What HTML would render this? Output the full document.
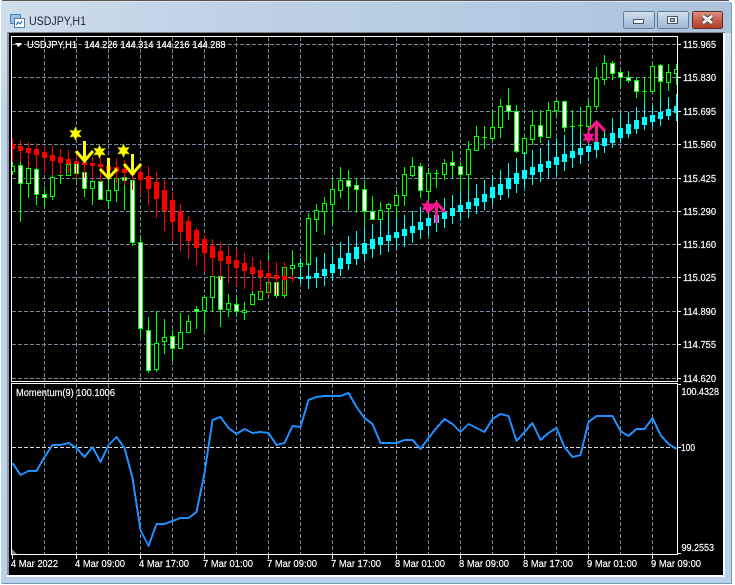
<!DOCTYPE html>
<html>
<head>
<meta charset="utf-8">
<style>
html,body{margin:0;padding:0;background:#fff;width:735px;height:585px;overflow:hidden}
svg{display:block}
text{font-family:"Liberation Sans",sans-serif;font-size:10px;fill:#fff;stroke:#fff;stroke-width:.18}
</style>
</head>
<body>
<svg width="735" height="585" viewBox="0 0 735 585" xmlns="http://www.w3.org/2000/svg" shape-rendering="crispEdges">
<defs>
<linearGradient id="tb" x1="0" x2="1" y1="0" y2="0"><stop offset="0" stop-color="#cfdeec"/><stop offset=".25" stop-color="#c2d4e6"/><stop offset="1" stop-color="#abc3dc"/></linearGradient>
<linearGradient id="lf" x1="0" x2="0" y1="0" y2="1"><stop offset="0" stop-color="#dbe6f0"/><stop offset=".2" stop-color="#bcd3ea"/><stop offset="1" stop-color="#b9d1ea"/></linearGradient>
<linearGradient id="btn" x1="0" x2="0" y1="0" y2="1"><stop offset="0" stop-color="#d6e2ee"/><stop offset=".5" stop-color="#b4c9df"/><stop offset="1" stop-color="#9fb8d2"/></linearGradient>
<linearGradient id="cls" x1="0" x2="0" y1="0" y2="1"><stop offset="0" stop-color="#dc9388"/><stop offset=".5" stop-color="#c8604c"/><stop offset="1" stop-color="#b03c22"/></linearGradient>
<clipPath id="mc"><rect x="12" y="37" width="665" height="344"/></clipPath>
<clipPath id="sc"><rect x="12" y="384" width="665" height="170"/></clipPath>
</defs>

<!-- window chrome -->
<rect x="0" y="0" width="733" height="585" fill="#fff"/>
<path d="M1 4Q1 1 4 1H728Q732 1 732 5V583H1Z" fill="url(#lf)"/>
<rect x="1" y="2" width="731" height="31" fill="url(#tb)"/>
<path d="M2 .5H729" stroke="#555" fill="none"/>
<path d="M731.5 4V583M1.5 583.5H732" stroke="#6f9cb4" fill="none"/>
<rect x="7" y="32" width="2" height="545" fill="#8e9aa6"/>
<rect x="723" y="32" width="2" height="545" fill="#fff"/>
<rect x="7" y="575" width="718" height="2" fill="#fff"/>
<rect x="7" y="32" width="718" height="1" fill="#77838f"/>
<rect x="9" y="33" width="714" height="542" fill="#000"/>

<!-- title -->
<g>
<rect x="10.5" y="14.5" width="10" height="9" fill="#9fc0e4" stroke="#4f7fb5"/>
<rect x="14.5" y="18.5" width="10" height="9" fill="#fff" stroke="#4f7fb5"/>
<path d="M16 25l2-3 2 2 2-3" stroke="#2f66b0" fill="none"/>
</g>
<text x="29" y="25" style="font-size:12px;fill:#232336;stroke:none" textLength="57" lengthAdjust="spacingAndGlyphs" shape-rendering="auto">USDJPY,H1</text>

<!-- buttons -->
<rect x="623.5" y="11.5" width="31" height="17" rx="2" fill="url(#btn)" stroke="#5f7d9c"/>
<rect x="633.5" y="19.5" width="10" height="4" fill="#f2f5f8" stroke="#44566a"/>
<rect x="657.5" y="11.5" width="31" height="17" rx="2" fill="url(#btn)" stroke="#5f7d9c"/>
<rect x="667.5" y="16.5" width="10" height="7" fill="#f2f5f8" stroke="#44566a"/>
<rect x="670.5" y="18.5" width="4" height="3" fill="#9fb8d2" stroke="#44566a"/>
<rect x="692.5" y="11.5" width="30" height="17" rx="2" fill="url(#cls)" stroke="#5b2a2a"/>
<path d="M703 16L712 23M712 16L703 23" stroke="#3b3b3b" stroke-width="4.5" fill="none" shape-rendering="auto"/>
<path d="M703 16L712 23M712 16L703 23" stroke="#f4f4f4" stroke-width="3" fill="none" shape-rendering="auto"/>

<!-- frames + grid -->
<g fill="none" stroke="#778899" stroke-dasharray="4 2">
<path d="M12 44.5H677M12 77.5H677M12 111.5H677M12 144.5H677M12 178.5H677M12 211.5H677M12 244.5H677M12 277.5H677M12 311.5H677M12 344.5H677M12 378.5H677"/>
<path d="M44.5 37V381M76.5 37V381M108.5 37V381M140.5 37V381M172.5 37V381M204.5 37V381M236.5 37V381M268.5 37V381M300.5 37V381M332.5 37V381M364.5 37V381M396.5 37V381M428.5 37V381M460.5 37V381M492.5 37V381M524.5 37V381M556.5 37V381M588.5 37V381M620.5 37V381M652.5 37V381"/>
<path d="M44.5 384V554M76.5 384V554M108.5 384V554M140.5 384V554M172.5 384V554M204.5 384V554M236.5 384V554M268.5 384V554M300.5 384V554M332.5 384V554M364.5 384V554M396.5 384V554M428.5 384V554M460.5 384V554M492.5 384V554M524.5 384V554M556.5 384V554M588.5 384V554M620.5 384V554M652.5 384V554"/>
<path d="M12 447.5H677" stroke="#dcdcdc"/>
</g>

<g clip-path="url(#mc)" fill="none">
<!-- green wicks -->
<path stroke="#0f0" d="M12.5 161V175M20.5 160V222M28.5 160V198M36.5 161V205M44.5 186V207M52.5 175V200M60.5 167V184M68.5 160V176M76.5 160V181M84.5 165V197M92.5 175V205M100.5 175V200M108.5 180V209M116.5 175V202M124.5 170V210M132.5 154V246M140.5 236V338M148.5 317V373M156.5 311V372M164.5 319V354M172.5 330V361M180.5 313V348M188.5 315V332M196.5 306V329M204.5 295V333M212.5 276V312M220.5 276V327M228.5 294V317M236.5 298V316M244.5 302V320M252.5 285V305M260.5 282V300M268.5 252V295M276.5 268V298M284.5 262V298M292.5 250V280M300.5 258V280M308.5 213V270M316.5 204V232M324.5 197V235M332.5 178V225M340.5 167V198M348.5 170V210M356.5 179V213M364.5 180V225M372.5 196V220M380.5 202V223M388.5 203V218M396.5 191V218M404.5 167V206M412.5 157V177M420.5 163V198M428.5 168V200M436.5 170V188M444.5 159V180M452.5 151V178M460.5 162V193M468.5 141V193M476.5 126V151M484.5 126V149M492.5 110V141M500.5 99V138M508.5 88V120M516.5 105V153M524.5 135V160M532.5 110V145M540.5 110V143M548.5 102V138M556.5 100V117M564.5 101V132M572.5 110V130M580.5 107V132M588.5 99V130M596.5 67V110M604.5 55V85M612.5 61V80M620.5 70V87M628.5 71V83M636.5 78V98M644.5 77V105M652.5 65V93M660.5 64V106M668.5 64V91M676.5 64V85"/>
<!-- hollow bodies -->
<path stroke="#0f0" fill="#000" d="M10.5 166.5h4v5h-4zM26.5 168.5h4v15h-4zM50.5 177.5h4v19h-4zM66.5 164.5h4v11h-4zM90.5 181.5h4v7h-4zM106.5 190.5h4v10h-4zM114.5 178.5h4v12h-4zM154.5 343.5h4v26h-4zM162.5 337.5h4v4h-4zM178.5 332.5h4v16h-4zM186.5 321.5h4v11h-4zM202.5 297.5h4v13h-4zM210.5 276.5h4v21h-4zM226.5 303.5h4v6h-4zM242.5 310.5h4v2h-4zM250.5 294.5h4v10h-4zM258.5 291.5h4v8h-4zM266.5 282.5h4v10h-4zM282.5 267.5h4v28h-4zM290.5 265.5h4v3h-4zM298.5 263.5h4v3h-4zM306.5 218.5h4v46h-4zM314.5 210.5h4v9h-4zM322.5 203.5h4v8h-4zM330.5 189.5h4v15h-4zM338.5 180.5h4v10h-4zM378.5 210.5h4v9h-4zM386.5 204.5h4v4h-4zM394.5 195.5h4v10h-4zM402.5 174.5h4v21h-4zM410.5 166.5h4v9h-4zM426.5 173.5h4v18h-4zM442.5 163.5h4v11h-4zM466.5 149.5h4v25h-4zM474.5 136.5h4v14h-4zM490.5 127.5h4v11h-4zM498.5 106.5h4v21h-4zM522.5 138.5h4v15h-4zM530.5 125.5h4v14h-4zM546.5 110.5h4v27h-4zM554.5 101.5h4v9h-4zM586.5 106.5h4v20h-4zM594.5 78.5h4v28h-4zM602.5 63.5h4v16h-4zM650.5 66.5h4v25h-4zM666.5 72.5h4v10h-4zM674.5 69.5h4v4h-4z"/>
<!-- white bodies -->
<path stroke="#0f0" fill="#fff" d="M18.5 165.5h4v18h-4zM34.5 169.5h4v25h-4zM42.5 194.5h4v3h-4zM74.5 163.5h4v10h-4zM82.5 172.5h4v16h-4zM98.5 181.5h4v18h-4zM122.5 177.5h4v3h-4zM130.5 180.5h4v62h-4zM138.5 242.5h4v86h-4zM146.5 330.5h4v40h-4zM170.5 336.5h4v12h-4zM194.5 309.5h4v2h-4zM218.5 276.5h4v33h-4zM234.5 304.5h4v7h-4zM274.5 282.5h4v13h-4zM346.5 180.5h4v6h-4zM354.5 185.5h4v4h-4zM362.5 189.5h4v22h-4zM370.5 211.5h4v8h-4zM418.5 166.5h4v24h-4zM450.5 162.5h4v3h-4zM458.5 166.5h4v8h-4zM506.5 105.5h4v6h-4zM514.5 111.5h4v40h-4zM538.5 125.5h4v11h-4zM562.5 101.5h4v26h-4zM610.5 63.5h4v10h-4zM618.5 72.5h4v5h-4zM626.5 77.5h4v3h-4zM634.5 80.5h4v11h-4zM658.5 65.5h4v16h-4z"/>
<!-- green dojis -->
<path stroke="#0f0" d="M58 175.5h5M434 173.5h5M482 137.5h5M570 126.5h5M578 125.5h5M642 91.5h5"/>

<!-- red wicks -->
<path stroke="#f00" d="M12.5 138V162M20.5 140V162M28.5 142V167M36.5 143V168M44.5 145V173M52.5 146V175M60.5 149V175M68.5 150V173M76.5 155V178M84.5 157V178M92.5 157V180M100.5 157V182M108.5 157V180M116.5 158V183M124.5 160V185M132.5 162V190M140.5 163V195M148.5 166V205M156.5 172V218M164.5 180V231M172.5 192V242M180.5 204V251M188.5 216V259M196.5 228V266M204.5 235V272M212.5 239V277M220.5 242V280M228.5 246V283M236.5 249V286M244.5 253V289M252.5 257V291M260.5 260V293M268.5 261V295M276.5 262V295M284.5 262V295M292.5 275V282"/>
<path fill="#f00" d="M10 144h5v5h-5zM18 146h5v5h-5zM26 148h5v5h-5zM34 149h5v6h-5zM42 152h5v6h-5zM50 155h5v6h-5zM58 157h5v6h-5zM66 159h5v5h-5zM74 161h5v3h-5zM82 162h5v3h-5zM90 163h5v3h-5zM98 164h5v3h-5zM106 166h5v5h-5zM114 167h5v5h-5zM122 169h5v4h-5zM130 170h5v5h-5zM138 172h5v8h-5zM146 176h5v13h-5zM154 182h5v17h-5zM162 190h5v21h-5zM170 200h5v22h-5zM178 211h5v21h-5zM186 221h5v20h-5zM194 230h5v18h-5zM202 239h5v14h-5zM210 246h5v12h-5zM218 251h5v10h-5zM226 256h5v8h-5zM234 260h5v8h-5zM242 263h5v8h-5zM250 267h5v7h-5zM258 270h5v7h-5zM266 273h5v5h-5zM274 275h5v4h-5zM282 276h5v4h-5z"/>
<path stroke="#f00" d="M290 278.5h5"/>

<!-- cyan wicks -->
<path stroke="#0ff" d="M300.5 259V284M308.5 263V289M316.5 257V288M324.5 253V286M332.5 246V281M340.5 242V276M348.5 236V270M356.5 231V265M364.5 227V261M372.5 224V258M380.5 219V255M388.5 215V252M396.5 218V250M404.5 215V247M412.5 211V243M420.5 207V239M428.5 205V236M436.5 200V232M444.5 198V228M452.5 195V224M460.5 192V221M468.5 190V218M476.5 184V214M484.5 180V210M492.5 175V205M500.5 170V200M508.5 163V198M516.5 158V193M524.5 152V188M532.5 150V185M540.5 148V182M548.5 140V178M556.5 138V176M564.5 135V171M572.5 128V168M580.5 132V164M588.5 133V161M596.5 128V158M604.5 130V153M612.5 118V148M620.5 113V143M628.5 112V138M636.5 107V134M644.5 102V130M652.5 105V127M660.5 98V126M668.5 97V120M676.5 94V121"/>
<path fill="#0ff" d="M298 277h5v2h-5zM306 276h5v3h-5zM314 273h5v5h-5zM322 269h5v7h-5zM330 264h5v9h-5zM338 258h5v11h-5zM346 253h5v11h-5zM354 247h5v12h-5zM362 243h5v11h-5zM370 239h5v10h-5zM378 237h5v8h-5zM386 235h5v6h-5zM394 232h5v6h-5zM402 229h5v7h-5zM410 226h5v7h-5zM418 222h5v8h-5zM426 218h5v8h-5zM434 215h5v8h-5zM442 212h5v7h-5zM450 208h5v8h-5zM458 205h5v7h-5zM466 202h5v7h-5zM474 198h5v8h-5zM482 194h5v8h-5zM490 187h5v11h-5zM498 184h5v11h-5zM506 178h5v11h-5zM514 173h5v11h-5zM522 170h5v9h-5zM530 167h5v8h-5zM538 164h5v8h-5zM546 161h5v7h-5zM554 157h5v8h-5zM562 154h5v8h-5zM570 151h5v7h-5zM578 148h5v7h-5zM586 146h5v6h-5zM594 142h5v8h-5zM602 138h5v8h-5zM610 133h5v10h-5zM618 128h5v10h-5zM626 124h5v10h-5zM634 120h5v9h-5zM642 117h5v8h-5zM650 115h5v7h-5zM658 112h5v7h-5zM666 109h5v7h-5zM674 106h5v7h-5z"/>
</g>

<!-- signals -->
<g shape-rendering="auto" fill="none">
<g fill="#ff0" stroke="#6a6a00" stroke-width=".5">
<path d="M75.5 126.500L77.300 130.600 81.700 130.100 79 133.700 81.700 137.200 77.300 136.800 75.500 140.800 73.700 136.800 69.300 137.200 72 133.700 69.300 130.100 73.700 130.600Z"/>
<path d="M99.500 144.500L101.300 148.600 105.700 148.100 103 151.700 105.700 155.200 101.300 154.800 99.500 158.800 97.700 154.800 93.300 155.200 96 151.700 93.300 148.100 97.700 148.600Z"/>
<path d="M123.500 143.500L125.300 147.600 129.700 147.100 127 150.700 129.700 154.200 125.300 153.800 123.500 157.800 121.700 153.800 117.300 154.200 120 150.700 117.300 147.100 121.700 147.600Z"/>
</g>
<g stroke="#ff0" stroke-width="3">
<path d="M84.500 141V161M76 151L84.500 161L93 151"/>
<path d="M108.500 158V178M100 169L108.500 178L117 169"/>
<path d="M132.500 154V174M124 164L132.500 174L141 164"/>
</g>
<g fill="#ff1493">
<path d="M427.500 199.500L429.300 203.600 433.700 203.100 431 206.700 433.700 210.200 429.300 209.800 427.500 213.800 425.700 209.800 421.300 210.200 424 206.700 421.300 203.100 425.700 203.600Z"/>
<path d="M588.500 130L590.300 134.100 594.700 133.600 592 137.200 594.700 140.700 590.300 140.300 588.500 144.300 586.700 140.300 582.300 140.700 585 137.200 582.300 133.600 586.700 134.100Z"/>
</g>
<g stroke="#ff1493" stroke-width="3">
<path d="M436.500 223V203M428 212L436.500 203L445 212"/>
<path d="M596.500 142V122M588 131L596.500 122L605 131"/>
</g>
</g>

<!-- momentum -->
<path clip-path="url(#sc)" shape-rendering="crispEdges" fill="none" stroke="#1e90ff" stroke-width="2" stroke-linejoin="round" d="M12.500 463L20.500 475 28.500 471 36.500 471 44.500 457 52.500 445 60.500 445 68.500 443 76.500 448 84.500 457 92.500 447 100.500 462 108.500 445 116.500 437 124.500 448 132.500 478 140.500 530 148.500 546 156.500 524 164.500 524 172.500 521 180.500 518 188.500 518 196.500 512 204.500 473 212.500 420 220.500 417 228.500 428 236.500 434 244.500 429 252.500 433 260.500 432 268.500 433 276.500 445 284.500 443 292.500 426 300.500 427 308.500 400 316.500 397 324.500 396 332.500 396 340.500 396 348.500 393 356.500 407 364.500 418 372.500 424 380.500 443 388.500 443 396.500 443 404.500 440 412.500 440 420.500 449 428.500 438 436.500 428 444.500 419 452.500 424 460.500 432 468.500 424 476.500 428 484.500 432 492.500 419 500.500 414 508.500 416 516.500 441 524.500 432 532.500 423 540.500 440 548.500 433 556.500 428 564.500 447 572.500 457 580.500 455 588.500 422 596.500 416 604.500 416 612.500 416 620.500 431 628.500 436 636.500 429 644.500 429 652.500 418 660.500 435 668.500 444 676.500 449"/>

<!-- frames -->
<g fill="none" stroke="#fff">
<path d="M11.500 36.500H677.500V381.500H11.500Z"/>
<path d="M11.500 383.500H677.500V554.500H11.500Z"/>
<path d="M678 44.500h3M678 77.500h3M678 111.500h3M678 144.500h3M678 178.500h3M678 211.500h3M678 244.500h3M678 277.500h3M678 311.500h3M678 344.500h3M678 378.500h3M678 384.500h3M678 447.500h3M678 553.500h3"/>
<path d="M12.500 555v4M76.500 555v4M140.500 555v4M204.500 555v4M268.500 555v4M332.500 555v4M396.500 555v4M460.500 555v4M524.500 555v4M588.500 555v4M652.500 555v4"/>
</g>
<path d="M12 549L17 554H12Z" fill="#808080" shape-rendering="auto"/>
<path d="M15 43H22L18.500 47Z" fill="#fff" shape-rendering="auto"/>

<!-- labels -->
<g shape-rendering="auto">
<text x="27" y="48" textLength="50" lengthAdjust="spacingAndGlyphs">USDJPY,H1</text>
<text x="84.500" y="48" textLength="33" lengthAdjust="spacingAndGlyphs">144.226</text>
<text x="120.500" y="48" textLength="33" lengthAdjust="spacingAndGlyphs">144.314</text>
<text x="156.500" y="48" textLength="33" lengthAdjust="spacingAndGlyphs">144.216</text>
<text x="192.500" y="48" textLength="33" lengthAdjust="spacingAndGlyphs">144.288</text>
<text x="16" y="396" textLength="99" lengthAdjust="spacingAndGlyphs">Momentum(9) 100.1006</text>
<text x="683" y="48" textLength="33" lengthAdjust="spacingAndGlyphs">115.965</text>
<text x="683" y="81" textLength="33" lengthAdjust="spacingAndGlyphs">115.830</text>
<text x="683" y="115" textLength="33" lengthAdjust="spacingAndGlyphs">115.695</text>
<text x="683" y="148" textLength="33" lengthAdjust="spacingAndGlyphs">115.560</text>
<text x="683" y="182" textLength="33" lengthAdjust="spacingAndGlyphs">115.425</text>
<text x="683" y="215" textLength="33" lengthAdjust="spacingAndGlyphs">115.290</text>
<text x="683" y="248" textLength="33" lengthAdjust="spacingAndGlyphs">115.160</text>
<text x="683" y="281" textLength="33" lengthAdjust="spacingAndGlyphs">115.025</text>
<text x="683" y="315" textLength="33" lengthAdjust="spacingAndGlyphs">114.890</text>
<text x="683" y="348" textLength="33" lengthAdjust="spacingAndGlyphs">114.755</text>
<text x="683" y="382" textLength="33" lengthAdjust="spacingAndGlyphs">114.620</text>
<text x="681.500" y="395" textLength="37.500" lengthAdjust="spacingAndGlyphs">100.4328</text>
<text x="681" y="451" textLength="14" lengthAdjust="spacingAndGlyphs">100</text>
<text x="681.500" y="551" textLength="32.500" lengthAdjust="spacingAndGlyphs">99.2553</text>
<text x="11" y="567" textLength="47" lengthAdjust="spacingAndGlyphs">4 Mar 2022</text>
<text x="75" y="567" textLength="50" lengthAdjust="spacingAndGlyphs">4 Mar 09:00</text>
<text x="139" y="567" textLength="50" lengthAdjust="spacingAndGlyphs">4 Mar 17:00</text>
<text x="203" y="567" textLength="50" lengthAdjust="spacingAndGlyphs">7 Mar 01:00</text>
<text x="267" y="567" textLength="50" lengthAdjust="spacingAndGlyphs">7 Mar 09:00</text>
<text x="331" y="567" textLength="50" lengthAdjust="spacingAndGlyphs">7 Mar 17:00</text>
<text x="395" y="567" textLength="50" lengthAdjust="spacingAndGlyphs">8 Mar 01:00</text>
<text x="459" y="567" textLength="50" lengthAdjust="spacingAndGlyphs">8 Mar 09:00</text>
<text x="523" y="567" textLength="50" lengthAdjust="spacingAndGlyphs">8 Mar 17:00</text>
<text x="587" y="567" textLength="50" lengthAdjust="spacingAndGlyphs">9 Mar 01:00</text>
<text x="651" y="567" textLength="50" lengthAdjust="spacingAndGlyphs">9 Mar 09:00</text>
</g>
</svg>
</body>
</html>
